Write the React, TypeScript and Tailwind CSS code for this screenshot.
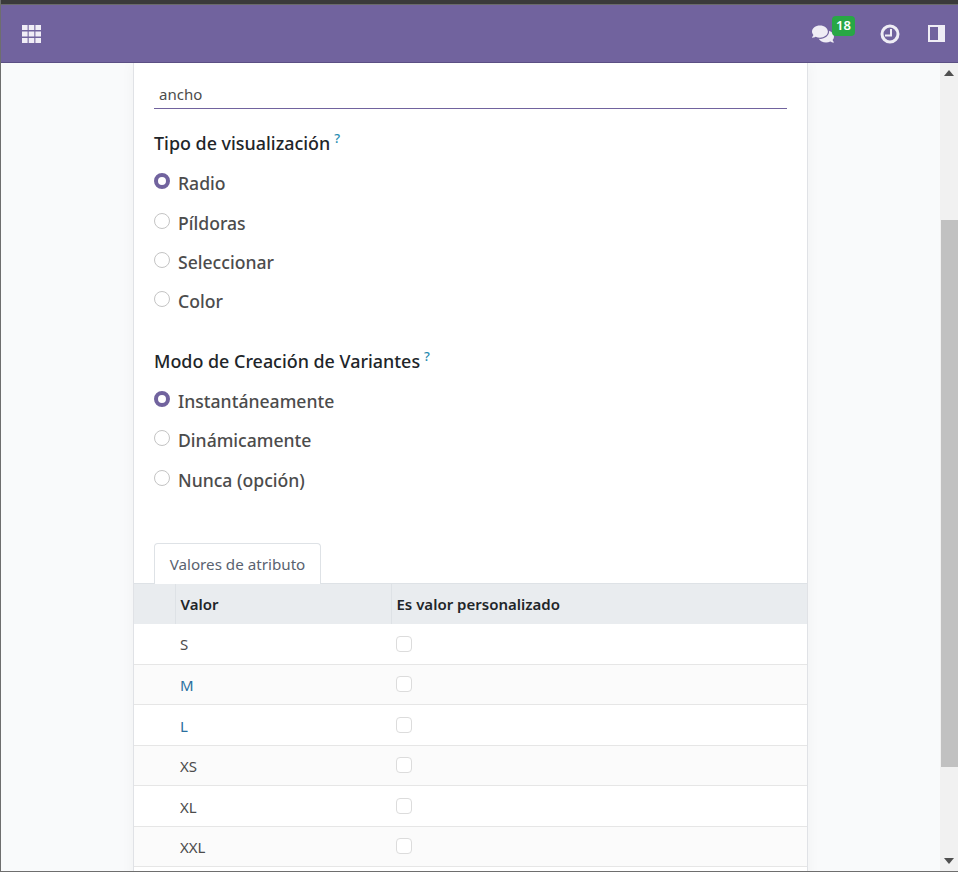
import { FaComments } from "react-icons/fa";

const displayTypes = ["Radio", "Píldoras", "Seleccionar", "Color"];
const variantModes = ["Instantáneamente", "Dinámicamente", "Nunca (opción)"];
const values = ["S", "M", "L", "XS", "XL", "XXL"];

function Radio({ label, checked, top }: { label: string; checked?: boolean; top: string }) {
  return (
    <div className={`flex h-[39.3px] items-start ${top}`}>
      {checked ? (
        <span className="mt-[2px] h-4 w-4 rounded-full border-[4px] border-[#71639e] bg-white" />
      ) : (
        <span className="mt-[2px] h-4 w-4 rounded-full border border-[#c4c4c4] bg-white" />
      )}
      <span className="ml-2 text-[17.6px] font-medium leading-6 text-[#4c4c4c]">{label}</span>
    </div>
  );
}

function FieldLabel({ text }: { text: string }) {
  return (
    <div className="flex items-start">
      <span className="text-[17.9px] font-medium leading-6 text-[#212529]">{text}</span>
      <sup className="ml-[4px] mt-[7px] text-[13px] font-medium leading-none text-[#1f8bb0]">?</sup>
    </div>
  );
}

export default function App() {
  return (
    <div className="flex h-[872px] w-[958px] flex-col overflow-hidden border-b border-l border-[#6e6e6e] bg-[#f9fafb] font-['Noto_Sans',sans-serif]">
      <div className="h-[4px] shrink-0 bg-[#3a3a3a]" />
      <header className="flex h-[59px] shrink-0 items-center justify-between border-t border-b border-t-[#6a6a6a] border-b-[#5b4f84] bg-[#71639e] text-white">
        <svg width="19" height="18" viewBox="0 0 19 18" className="ml-[21px] fill-[#f0edf6]">
          <path d="M0 0h5.6v5H0zM6.7 0h5.6v5H6.7zM13.4 0H19v5h-5.6zM0 6.5h5.6v5H0zM6.7 6.5h5.6v5H6.7zM13.4 6.5H19v5h-5.6zM0 13h5.6v5H0zM6.7 13h5.6v5H6.7zM13.4 13H19v5h-5.6z" />
        </svg>
        <div className="flex items-center">
          <div className="relative mr-[46px]">
            <FaComments className="h-[22px] w-[22px] text-[#efedf5]" />
            <span className="absolute -right-[21px] -top-[7px] flex h-[20px] w-[23px] items-center justify-center rounded-[4px] bg-[#28a745] text-[13px] font-semibold leading-none text-white">
              18
            </span>
          </div>
          <svg width="20" height="20" viewBox="0 0 20 20" fill="none" className="mr-[28px] text-[#efedf5]">
            <circle cx="10" cy="10" r="8" stroke="currentColor" strokeWidth="3" />
            <path d="M11 5 V11.5 H5" stroke="currentColor" strokeWidth="2" />
          </svg>
          <svg width="17" height="17" viewBox="0 0 17 17" className="mr-[13px] text-[#efedf5]" fill="none">
            <rect x="0" y="0" width="17" height="17" fill="currentColor" />
            <rect x="2" y="2" width="8" height="13" fill="#71639e" />
          </svg>
        </div>
      </header>

      <div className="flex min-h-0 flex-1">
        <main className="min-w-0 flex-1 overflow-hidden">
          <div className="ml-[132px] h-[900px] w-[675px] border-x border-[#e0e2e6] bg-white shadow-[0_0_14px_rgba(0,0,0,0.04)]">
            <div className="px-[20px] pt-[19px]">
              <div className="h-[27px] border-b border-[#71639e] pl-[5px] text-[15px] leading-6 text-[#4c4c4c]">ancho</div>

              <div className="mt-[22px]">
                <FieldLabel text="Tipo de visualización" />
              </div>
              {displayTypes.map((label, i) => (
                <Radio key={label} label={label} checked={i === 0} top={i === 0 ? "mt-[16.4px]" : ""} />
              ))}

              <div className="mt-[20.6px]">
                <FieldLabel text="Modo de Creación de Variantes" />
              </div>
              {variantModes.map((label, i) => (
                <Radio key={label} label={label} checked={i === 0} top={i === 0 ? "mt-[16px]" : ""} />
              ))}

              <div className="mt-[36px] flex">
                <div className="relative z-10 -mb-px h-[41px] w-[167px] rounded-t-[4px] border border-b-0 border-[#dee2e6] bg-white pt-[8px] text-center text-[15.2px] leading-6 text-[#5a6270]">
                  Valores de atributo
                </div>
              </div>
            </div>

            <table className="w-full border-collapse border-t border-[#dee2e6] text-[15px]">
              <thead>
                <tr className="h-[40px] bg-[#e9ecef] text-left text-[#212529]">
                  <th className="w-[41px] border-r border-[#dee2e6] p-0" />
                  <th className="w-[216px] border-r border-[#dee2e6] pb-0 pl-[5px] pt-[1px] font-semibold">Valor</th>
                  <th className="pb-0 pl-[5px] pt-[1px] font-semibold">Es valor personalizado</th>
                </tr>
              </thead>
              <tbody>
                {values.map((value, i) => (
                  <tr key={value} className={`h-[40.5px] border-b border-[#e6e6e6] ${i % 2 === 1 ? "bg-[#fbfbfb]" : "bg-white"}`}>
                    <td className="p-0" />
                    <td className={`pb-0 pl-[5px] pt-[2px] ${value === "M" || value === "L" ? "text-[#2a6f9e]" : "text-[#4c4c4c]"}`}>{value}</td>
                    <td className="py-0 pl-[5px]">
                      <span className="block h-4 w-4 rounded-[4px] border border-[#dcdcdc] bg-white" />
                    </td>
                  </tr>
                ))}
              </tbody>
            </table>
          </div>
        </main>

        <div className="flex w-[18px] shrink-0 flex-col items-center bg-[#f1f1f1]">
          <svg width="10" height="6" viewBox="0 0 10 6" className="mt-[7px] shrink-0 fill-[#505050]">
            <path d="M5 0 L10 6 L0 6 Z" />
          </svg>
          <div className="ml-[1px] mt-[144px] h-[547px] w-[17px] shrink-0 bg-[#c1c1c1]" />
          <svg width="10" height="6" viewBox="0 0 10 6" className="mt-[91px] shrink-0 fill-[#505050]">
            <path d="M0 0 L10 0 L5 6 Z" />
          </svg>
        </div>
      </div>
    </div>
  );
}
